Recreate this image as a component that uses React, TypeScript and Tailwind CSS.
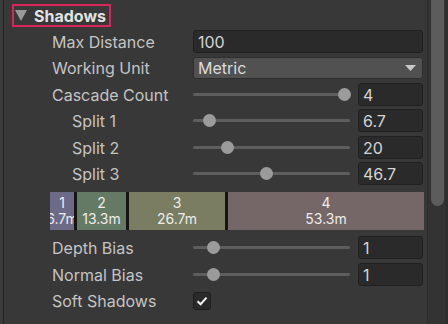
import React from "react";

type SliderRowProps = {
  label: string;
  value: string;
  thumb: number;
  indent?: boolean;
};

const font = { fontFamily: "Inter, 'Noto Sans', sans-serif" };

function Label({ text, indent }: { text: string; indent?: boolean }) {
  return (
    <div className={`shrink-0 pt-[1px] text-[16px] text-[#c4c4c4] ${indent ? "w-[141px] pl-[20px]" : "w-[141px]"}`}>
      {text}
    </div>
  );
}

function SliderRow({ label, value, thumb, indent }: SliderRowProps) {
  return (
    <div className="flex h-[26.5px] items-center">
      <Label text={label} indent={indent} />
      <div className="flex w-[230px] items-center gap-[8px]">
        <div className="relative h-[13px] w-[157px]">
          <div className="absolute left-0 right-0 top-[5px] h-[3px] rounded-full bg-[#5e5e5e]" />
          <div
            className="absolute top-0 h-[13px] w-[13px] rounded-full bg-[#9b9b9b]"
            style={{ left: thumb }}
          />
        </div>
        <div className="flex h-[23px] w-[65px] items-center rounded-[3px] border border-[#202020] bg-[#2a2a2a] px-[4px] pt-[1px] text-[16px] text-[#d4d4d4]">
          {value}
        </div>
      </div>
    </div>
  );
}

const cascades = [
  { n: "1", d: "6.7m", w: "w-[24px]", bg: "bg-[#6c6a86]" },
  { n: "2", d: "13.3m", w: "w-[49px]", bg: "bg-[#657a64]" },
  { n: "3", d: "26.7m", w: "w-[96px]", bg: "bg-[#7b7d62]" },
  { n: "4", d: "53.3m", w: "flex-1", bg: "bg-[#756767]" },
];

export default function App() {
  return (
    <div className="flex h-[324px] w-[448px] overflow-hidden bg-[#383838]" style={font}>
      <div className="w-[3px] shrink-0 bg-[#3b3b3b]" />
      <div className="w-px shrink-0 bg-[#232323]" />

      <div className="flex w-[423px] shrink-0 flex-col">
        <div className="h-[28px] pl-[8px] pt-[4px]">
          <div className="flex h-[23px] w-[99px] items-center gap-[7px] border-2 border-[#d9245c] pl-[1px]">
            <svg width="12" height="11" viewBox="0 0 12 11">
              <path d="M0 0 H12 L6 11 Z" fill="#9a9a9a" />
            </svg>
            <span className="text-[16px] font-bold text-[#e2e2e2]">Shadows</span>
          </div>
        </div>

        <div className="flex flex-col pl-[48px]">
          <div className="flex h-[26.5px] items-center">
            <Label text="Max Distance" />
            <div className="flex h-[23px] w-[230px] items-center rounded-[3px] border border-[#202020] bg-[#2a2a2a] px-[4px] pt-[1px] text-[16px] text-[#d4d4d4]">
              100
            </div>
          </div>

          <div className="flex h-[26.5px] items-center">
            <Label text="Working Unit" />
            <div className="flex h-[22px] w-[230px] items-center justify-between rounded-[3px] border border-[#2e2e2e] bg-[#515151] pl-[4px] pr-[6px] text-[16px] text-[#dcdcdc]">
              <span className="pt-[1px]">Metric</span>
              <svg width="11" height="6" viewBox="0 0 11 6">
                <path d="M0 0 H11 L5.5 6 Z" fill="#c8c8c8" />
              </svg>
            </div>
          </div>

          <SliderRow label="Cascade Count" value="4" thumb={144.5} />
          <SliderRow label="Split 1" value="6.7" thumb={9.5} indent />
          <SliderRow label="Split 2" value="20" thumb={28} indent />
          <SliderRow label="Split 3" value="46.7" thumb={67} indent />
        </div>

        <div className="ml-[46px] mt-[5px] flex h-[38px] w-[374px] gap-[3px] bg-[#151515]">
          {cascades.map((c) => (
            <div
              key={c.n}
              className={`flex shrink-0 flex-col items-center justify-center overflow-hidden text-[14px] leading-[16px] text-[#ececec] ${c.w} ${c.bg}`}
            >
              <span className="whitespace-nowrap">{c.n}</span>
              <span className="whitespace-nowrap">{c.d}</span>
            </div>
          ))}
        </div>

        <div className="mt-[4.5px] flex flex-col pl-[48px]">
          <SliderRow label="Depth Bias" value="1" thumb={14} />
          <SliderRow label="Normal Bias" value="1" thumb={14} />
          <div className="flex h-[26.5px] items-center">
            <Label text="Soft Shadows" />
            <div className="flex h-[18px] w-[18px] items-center justify-center rounded-[3px] border border-[#1e1e1e] bg-[#2a2a2a]">
              <svg width="12" height="10" viewBox="0 0 12 10">
                <path d="M1.5 5.2 L4.6 8.2 L10.5 1.6" fill="none" stroke="#f2f2f2" strokeWidth="2" />
              </svg>
            </div>
          </div>
        </div>
      </div>

      <div className="flex w-[21px] shrink-0 border-l border-[#2c2c2c] bg-[#333333]">
        <div className="ml-[3px] -mt-[10px] h-[216px] w-[13px] rounded-full bg-[#5c5c5c]" />
        <div className="ml-[1px] w-[3px] bg-[#2e2e2e]" />
      </div>
    </div>
  );
}
